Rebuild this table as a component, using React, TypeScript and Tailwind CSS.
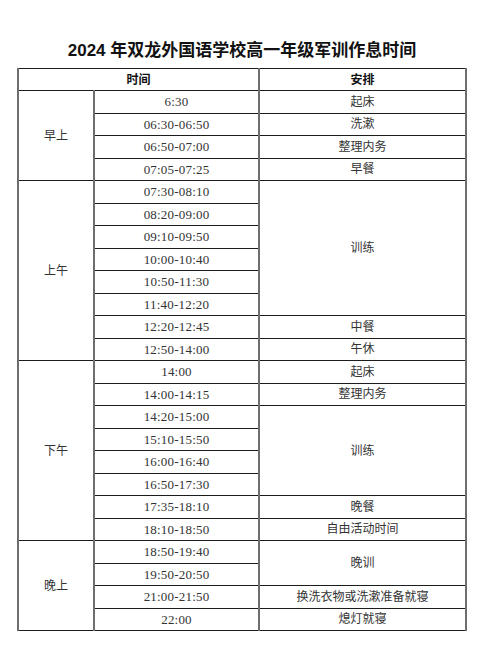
type Row = { time: string; act?: string; span?: number };

const groups: { name: string; rows: Row[] }[] = [
  {
    name: '早上',
    rows: [
      { time: '6:30', act: '起床' },
      { time: '06:30-06:50', act: '洗漱' },
      { time: '06:50-07:00', act: '整理内务' },
      { time: '07:05-07:25', act: '早餐' },
    ],
  },
  {
    name: '上午',
    rows: [
      { time: '07:30-08:10', act: '训练', span: 6 },
      { time: '08:20-09:00' },
      { time: '09:10-09:50' },
      { time: '10:00-10:40' },
      { time: '10:50-11:30' },
      { time: '11:40-12:20' },
      { time: '12:20-12:45', act: '中餐' },
      { time: '12:50-14:00', act: '午休' },
    ],
  },
  {
    name: '下午',
    rows: [
      { time: '14:00', act: '起床' },
      { time: '14:00-14:15', act: '整理内务' },
      { time: '14:20-15:00', act: '训练', span: 4 },
      { time: '15:10-15:50' },
      { time: '16:00-16:40' },
      { time: '16:50-17:30' },
      { time: '17:35-18:10', act: '晚餐' },
      { time: '18:10-18:50', act: '自由活动时间' },
    ],
  },
  {
    name: '晚上',
    rows: [
      { time: '18:50-19:40', act: '晚训', span: 2 },
      { time: '19:50-20:50' },
      { time: '21:00-21:50', act: '换洗衣物或洗漱准备就寝' },
      { time: '22:00', act: '熄灯就寝' },
    ],
  },
];

const cell =
  'border-y border-y-[#1c1c1c] border-x-2 border-x-[#6e6e6e] text-center align-middle p-0';

export default function App() {
  return (
    <div className="w-[484px] h-[648px] bg-white pt-[40px]" style={{ fontFamily: '"Liberation Serif", "Noto Sans CJK SC", serif' }}>
      <h1
        className="text-center text-[17px] leading-[22px] font-bold text-[#111] mb-[5.5px]"
        style={{ fontFamily: '"Liberation Sans", "Noto Sans CJK SC", sans-serif' }}
      >
        2024 年双龙外国语学校高一年级军训作息时间
      </h1>
      <table className="ml-[17px] w-[448px] table-fixed border-collapse text-[13px] text-[#333]">
        <colgroup>
          <col className="w-[76px]" />
          <col className="w-[165px]" />
          <col className="w-[207px]" />
        </colgroup>
        <tbody>
          <tr className="h-[22.5px]">
            <td colSpan={2} className={`${cell} text-[12px] font-bold text-[#111]`} style={{ fontFamily: '"Noto Sans CJK SC", sans-serif' }}>
              时间
            </td>
            <td className={`${cell} text-[12px] font-bold text-[#111]`} style={{ fontFamily: '"Noto Sans CJK SC", sans-serif' }}>
              安排
            </td>
          </tr>
          {groups.map((g) =>
            g.rows.map((r, i) => (
              <tr key={g.name + r.time} className="h-[22.5px]">
                {i === 0 && (
                  <td rowSpan={g.rows.length} className={`${cell} text-[12px]`}>
                    {g.name}
                  </td>
                )}
                <td className={`${cell} tracking-[0.2px]`}>{r.time}</td>
                {r.act && (
                  <td rowSpan={r.span ?? 1} className={`${cell} text-[12px]`}>
                    {r.act}
                  </td>
                )}
              </tr>
            ))
          )}
        </tbody>
      </table>
    </div>
  );
}
